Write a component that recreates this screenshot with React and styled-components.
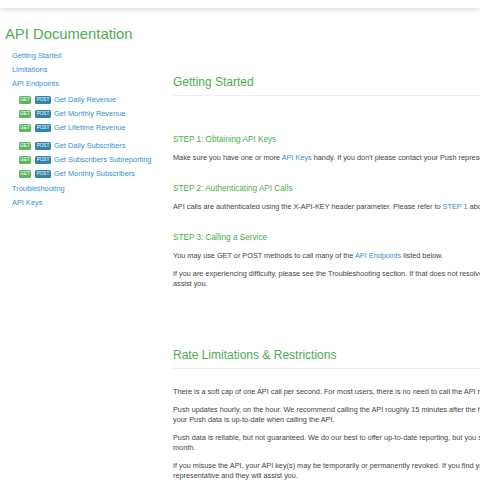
import styled, { createGlobalStyle } from "styled-components"

const GlobalStyle = createGlobalStyle`
  html, body {
    margin: 0;
    padding: 0;
    background: #fff;
    overflow: hidden;
  }
  body {
    font-family: "Liberation Sans", Arial, sans-serif;
    color: #444;
  }
`

const green = "#4cae50"
const blue = "#2f8fd8"

const TopBar = styled.div`
  height: 8px;
  overflow: hidden;
  background: #fff;
  box-shadow: 0 2px 5px rgba(0, 0, 0, 0.12);
  padding-left: 5px;
`

const BackLink = styled.a`
  display: block;
  margin-top: -7px;
  font-size: 8px;
  line-height: 10px;
  color: ${blue};
  text-decoration: none;
`

const Title = styled.h1`
  margin: 14px 0 0 5px;
  font-size: 14.8px;
  line-height: 24px;
  font-weight: normal;
  color: ${green};
`

const Layout = styled.div`
  display: grid;
  grid-template-columns: 173px 600px;
  margin-top: 3px;
`

const Sidebar = styled.nav`
  padding-left: 12px;
  display: flex;
  flex-direction: column;
`

const NavLink = styled.a`
  display: block;
  font-size: 7.4px;
  line-height: 14px;
  color: ${blue};
  text-decoration: none;
  white-space: nowrap;
  margin-top: ${(p) => p.$gap || 0}px;
`

const EndpointGroup = styled.div`
  display: flex;
  flex-direction: column;
  padding-left: 7px;
  margin-top: ${(p) => p.$gap}px;
`

const EndpointRow = styled.div`
  display: flex;
  align-items: center;
  height: 14px;
  gap: 3px;
`

const Badges = styled.div`
  display: flex;
  align-items: center;
  gap: 4px;
`

const Badge = styled.span`
  display: flex;
  align-items: center;
  justify-content: center;
  width: ${(p) => (p.$post ? 16 : 12)}px;
  height: 8px;
  border-radius: 1.5px;
  background: ${(p) => (p.$post ? "#2e86a8" : "#5cb85c")};
  color: #fff;
  font-size: 4.6px;
  line-height: 8px;
  text-transform: uppercase;
`

const Main = styled.main`
  padding-top: 25px;
`

const Section = styled.section`
  margin-top: ${(p) => p.$gap || 0}px;
`

const SectionTitle = styled.h2`
  margin: 0 0 18px;
  padding-bottom: 5px;
  border-bottom: 1.5px solid #eeeeee;
  font-size: 12px;
  line-height: 16px;
  font-weight: normal;
  color: ${green};
  white-space: nowrap;
`

const Step = styled.h3`
  margin: ${(p) => p.$gap || 20}px 0 7px;
  font-size: 8.2px;
  line-height: 12px;
  font-weight: normal;
  color: ${green};
`

const P = styled.p`
  margin: 0 0 8px;
  font-size: 7.3px;
  line-height: 10px;
  color: #444;
  white-space: nowrap;
`

const A = styled.a`
  color: ${blue};
  text-decoration: none;
`

const endpoints = [
  ["Get Daily Revenue", "Get Monthly Revenue", "Get Lifetime Revenue"],
  ["Get Daily Subscribers", "Get Subscribers Subreporting", "Get Monthly Subscribers"],
]

export default function App() {
  return (
    <>
      <GlobalStyle />
      <TopBar>
        <BackLink href="#">‹ Back to Push</BackLink>
      </TopBar>
      <Title>API Documentation</Title>
      <Layout>
        <Sidebar>
          <NavLink href="#">Getting Started</NavLink>
          <NavLink href="#">Limitations</NavLink>
          <NavLink href="#">API Endpoints</NavLink>
          {endpoints.map((group, gi) => (
            <EndpointGroup key={gi} $gap={gi === 0 ? 2 : 4}>
              {group.map((name) => (
                <EndpointRow key={name}>
                  <Badges>
                    <Badge>Get</Badge>
                    <Badge $post>Post</Badge>
                  </Badges>
                  <NavLink href="#">{name}</NavLink>
                </EndpointRow>
              ))}
            </EndpointGroup>
          ))}
          <NavLink href="#" $gap={1}>Troubleshooting</NavLink>
          <NavLink href="#">API Keys</NavLink>
        </Sidebar>
        <Main>
          <Section>
            <SectionTitle>Getting Started</SectionTitle>
            <Step $gap={38}>STEP 1: Obtaining API Keys</Step>
            <P>
              Make sure you have one or more <A href="#">API Keys</A> handy. If you don't please contact your Push representative.
            </P>
            <Step>STEP 2: Authenticating API Calls</Step>
            <P>
              API calls are authenticated using the X-API-KEY header parameter. Please refer to <A href="#">STEP 1</A> above.
            </P>
            <Step>STEP 3: Calling a Service</Step>
            <P>
              You may use GET or POST methods to call many of the <A href="#">API Endpoints</A> listed below.
            </P>
            <P>
              If you are experiencing difficulty, please see the Troubleshooting section. If that does not resolve your issue, your Push representative will
              <br />
              assist you.
            </P>
          </Section>
          <Section $gap={58}>
            <SectionTitle>Rate Limitations &amp; Restrictions</SectionTitle>
            <P>There is a soft cap of one API call per second. For most users, there is no need to call the API more often.</P>
            <P>
              Push updates hourly, on the hour. We recommend calling the API roughly 15 minutes after the hour to ensure that
              <br />
              your Push data is up-to-date when calling the API.
            </P>
            <P>
              Push data is reliable, but not guaranteed. We do our best to offer up-to-date reporting, but you should reconcile at the end of each
              <br />
              month.
            </P>
            <P>
              If you misuse the API, your API key(s) may be temporarily or permanently revoked. If you find yourself locked out, contact your Push
              <br />
              representative and they will assist you.
            </P>
          </Section>
        </Main>
      </Layout>
    </>
  )
}
